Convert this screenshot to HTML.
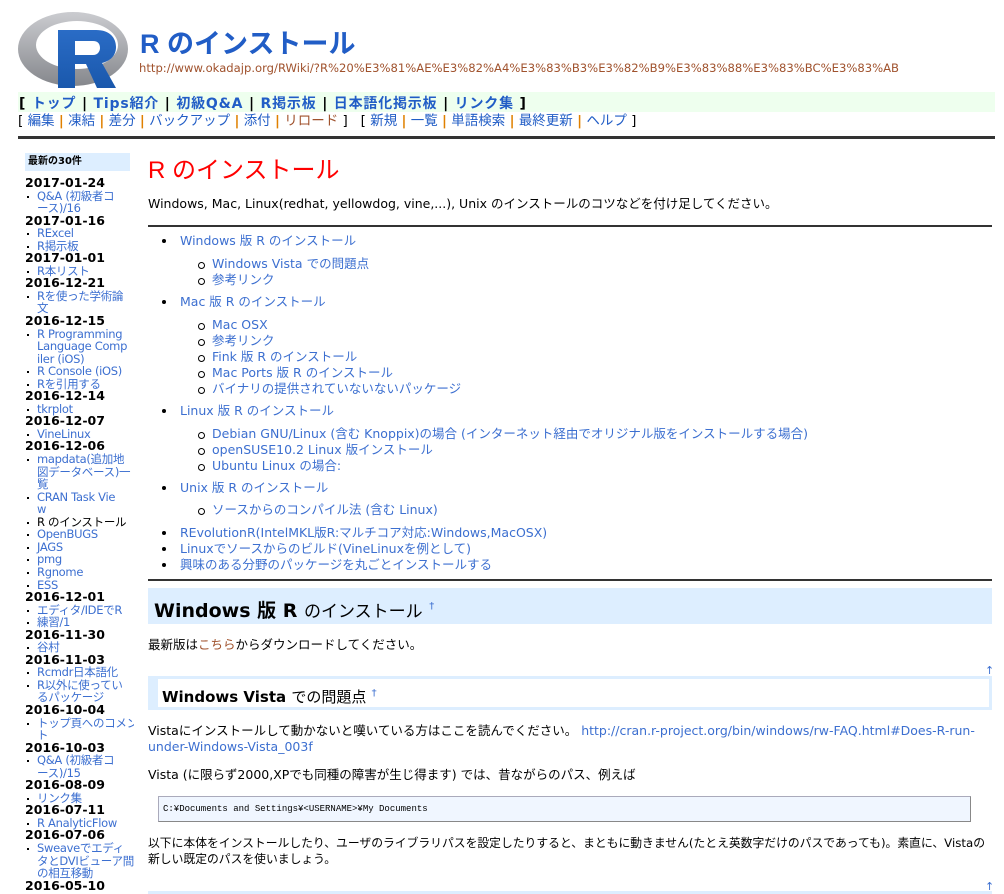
<!DOCTYPE html>
<html><head><meta charset="utf-8">
<style>
*{margin:0;padding:0;box-sizing:border-box}
body{width:1004px;height:894px;overflow:hidden;background:#fff;font-family:"DejaVu Sans","Noto Sans CJK JP",sans-serif;color:#000;position:relative}
.a{position:absolute;white-space:nowrap}
a{color:#215dc6;text-decoration:none}
.lk{color:#3c6fd0}
.menu1{left:18px;top:92px;width:977px;height:20px;background:#eeffee;font-size:14px;font-weight:bold;line-height:24px;padding-left:1px;letter-spacing:0.8px}
.menu1 a{color:#215dc6}
.menu2{left:18px;top:112px;font-size:13.5px;line-height:18px}
.menu2 a{color:#215dc6}
.sep{color:#e08000;font-weight:bold}
.side{position:absolute;left:24px;top:177px;width:110px;overflow:hidden;font-size:11.5px;line-height:12.55px}
.side .d{font-weight:bold;font-size:12.5px;margin-left:1px}
.side .i{position:relative;padding-left:13px;color:#3c6fd0;white-space:nowrap;letter-spacing:-0.3px}
.side .i:before{content:"";position:absolute;left:3px;top:6px;width:2px;height:2px;background:#000}
.b{position:absolute;font-size:12.5px;color:#3c6fd0;white-space:nowrap;line-height:16px}
.b:before{content:"";position:absolute;left:-18px;top:6px;width:4px;height:4px;border-radius:50%;background:#000}
.s:before{left:-14px;top:6px;width:5px;height:5px;background:#fff;border:1px solid #000}
p{position:absolute;font-size:12.5px;white-space:nowrap;line-height:16px}
</style></head><body>

<svg style="position:absolute;left:0;top:0" width="135" height="95">
<defs>
<linearGradient id="g" x1="0" y1="0" x2="0" y2="1"><stop offset="0" stop-color="#cbccd0"/><stop offset="1" stop-color="#85878c"/></linearGradient>
<linearGradient id="bl" x1="0" y1="0" x2="0" y2="1"><stop offset="0" stop-color="#2a6cc6"/><stop offset="1" stop-color="#1a58ac"/></linearGradient>
</defs>
<path fill-rule="evenodd" fill="url(#g)" d="M18 49 A55 37 0 1 0 128 49 A55 37 0 1 0 18 49 Z M36 45 A41 24 0 1 1 118 45 A41 24 0 1 1 36 45 Z"/>
<path fill-rule="evenodd" fill="url(#bl)" d="M58 30 H96 C110 30 116 38 116 47 C116 56 110 61 102 63 L116 88 H97 L86 64 H75 V88 H58 Z M75 41 V55 H93 C98 55 100 51 100 48 C100 44 98 41 93 41 Z"/>
</svg>
<div class="a" style="left:140px;top:22px;font-size:27px;font-weight:bold;color:#215dc6;font-family:'Liberation Sans','Noto Sans CJK JP',sans-serif">R のインストール</div>
<div class="a" style="left:139px;top:61px;font-size:11.6px;color:#a0522d">http://www.okadajp.org/RWiki/?R%20%E3%81%AE%E3%82%A4%E3%83%B3%E3%82%B9%E3%83%88%E3%83%BC%E3%83%AB</div>

<div class="a menu1">[ <a>トップ</a> | <a>Tips紹介</a> | <a>初級Q&amp;A</a> | <a>R掲示板</a> | <a>日本語化掲示板</a> | <a>リンク集</a> ]</div>
<div class="a menu2">[ <a>編集</a> <span class="sep">|</span> <a>凍結</a> <span class="sep">|</span> <a>差分</a> <span class="sep">|</span> <a>バックアップ</a> <span class="sep">|</span> <a>添付</a> <span class="sep">|</span> <a style="color:#a0522d">リロード</a> ] &nbsp; [ <a>新規</a> <span class="sep">|</span> <a>一覧</a> <span class="sep">|</span> <a>単語検索</a> <span class="sep">|</span> <a>最終更新</a> <span class="sep">|</span> <a>ヘルプ</a> ]</div>
<div class="a" style="left:18px;top:136px;width:977px;height:3px;background:#333"></div>

<div class="a" style="left:25px;top:153px;width:105px;height:18px;background:#ddeeff;font-size:10px;font-weight:bold;line-height:18px;padding-left:3px">最新の30件</div>
<div class="side">
<div class="d">2017-01-24</div><div class="i">Q&amp;A (初級者コ<br>ース)/16</div>
<div class="d">2017-01-16</div><div class="i">RExcel</div><div class="i">R掲示板</div>
<div class="d">2017-01-01</div><div class="i">R本リスト</div>
<div class="d">2016-12-21</div><div class="i">Rを使った学術論<br>文</div>
<div class="d">2016-12-15</div><div class="i">R Programming<br>Language Comp<br>iler (iOS)</div><div class="i">R Console (iOS)</div><div class="i">Rを引用する</div>
<div class="d">2016-12-14</div><div class="i">tkrplot</div>
<div class="d">2016-12-07</div><div class="i">VineLinux</div>
<div class="d">2016-12-06</div><div class="i">mapdata(追加地<br>図データベース)一<br>覧</div><div class="i">CRAN Task Vie<br>w</div><div class="i" style="color:#000">R のインストール</div><div class="i">OpenBUGS</div><div class="i">JAGS</div><div class="i">pmg</div><div class="i">Rgnome</div><div class="i">ESS</div>
<div class="d">2016-12-01</div><div class="i">エディタ/IDEでR</div><div class="i">練習/1</div>
<div class="d">2016-11-30</div><div class="i">谷村</div>
<div class="d">2016-11-03</div><div class="i">Rcmdr日本語化</div><div class="i">R以外に使ってい<br>るパッケージ</div>
<div class="d">2016-10-04</div><div class="i">トップ頁へのコメン<br>ト</div>
<div class="d">2016-10-03</div><div class="i">Q&amp;A (初級者コ<br>ース)/15</div>
<div class="d">2016-08-09</div><div class="i">リンク集</div>
<div class="d">2016-07-11</div><div class="i">R AnalyticFlow</div>
<div class="d">2016-07-06</div><div class="i">Sweaveでエディ<br>タとDVIビューア間<br>の相互移動</div>
<div class="d">2016-05-10</div>
</div>

<div class="a" style="left:148px;top:156px;font-size:24px;color:#ff0000;line-height:30px;font-family:'Liberation Sans','Noto Sans CJK JP',sans-serif">R のインストール</div>
<p style="left:148px;top:196px">Windows, Mac, Linux(redhat, yellowdog, vine,...), Unix のインストールのコツなどを付け足してください。</p>
<div class="a" style="left:148px;top:225px;width:844px;height:2px;background:#333"></div>

<div class="b" style="left:180px;top:233px">Windows 版 R のインストール</div>
<div class="b s" style="left:212px;top:256px">Windows Vista での問題点</div>
<div class="b s" style="left:212px;top:272px">参考リンク</div>
<div class="b" style="left:180px;top:294px">Mac 版 R のインストール</div>
<div class="b s" style="left:212px;top:317px">Mac OSX</div>
<div class="b s" style="left:212px;top:333px">参考リンク</div>
<div class="b s" style="left:212px;top:349px">Fink 版 R のインストール</div>
<div class="b s" style="left:212px;top:365px">Mac Ports 版 R のインストール</div>
<div class="b s" style="left:212px;top:381px">バイナリの提供されていないないパッケージ</div>
<div class="b" style="left:180px;top:403px">Linux 版 R のインストール</div>
<div class="b s" style="left:212px;top:426px">Debian GNU/Linux (含む Knoppix)の場合 (インターネット経由でオリジナル版をインストールする場合)</div>
<div class="b s" style="left:212px;top:442px">openSUSE10.2 Linux 版インストール</div>
<div class="b s" style="left:212px;top:458px">Ubuntu Linux の場合:</div>
<div class="b" style="left:180px;top:480px">Unix 版 R のインストール</div>
<div class="b s" style="left:212px;top:502px">ソースからのコンパイル法 (含む Linux)</div>
<div class="b" style="left:180px;top:525px">REvolutionR(IntelMKL版R:マルチコア対応:Windows,MacOSX)</div>
<div class="b" style="left:180px;top:541px">Linuxでソースからのビルド(VineLinuxを例として)</div>
<div class="b" style="left:180px;top:557px">興味のある分野のパッケージを丸ごとインストールする</div>
<div class="a" style="left:148px;top:579px;width:844px;height:2px;background:#333"></div>

<div class="a" style="left:148px;top:588px;width:844px;height:36px;background:#ddeeff;font-size:19px;font-weight:bold;line-height:38px;padding-left:6px">Windows 版 R <span style="font-weight:normal;font-size:17px">のインストール</span> <sup style="font-size:10px;color:#3c6fd0;font-weight:normal;vertical-align:8px">†</sup></div>
<p style="left:148px;top:637px">最新版は<span style="color:#a0522d">こちら</span>からダウンロードしてください。</p>
<div class="a" style="left:985px;top:664px;font-size:11px;color:#3c6fd0">↑</div>
<div class="a" style="left:148px;top:676px;width:844px;height:34px;border:3px solid #ddeeff;border-left-width:10px;border-right-width:3px;font-size:15px;font-weight:bold;line-height:30px;padding-left:4px">Windows Vista <span style="font-weight:normal">での問題点</span> <sup style="font-size:10px;color:#3c6fd0;font-weight:normal;vertical-align:6px">†</sup></div>
<p style="left:148px;top:723px">Vistaにインストールして動かないと嘆いている方はここを読んでください。 <span class="lk">http://cran.r-project.org/bin/windows/rw-FAQ.html#Does-R-run-</span></p>
<p style="left:148px;top:739px"><span class="lk">under-Windows-Vista_003f</span></p>
<p style="left:148px;top:767px">Vista (に限らず2000,XPでも同種の障害が生じ得ます) では、昔ながらのパス、例えば</p>
<div class="a" style="left:158px;top:796px;width:813px;height:26px;background:#f0f6ff;border:1px solid #aab;border-right-color:#888;border-bottom-color:#888;font-family:'Liberation Mono',monospace;font-size:9px;line-height:24px;padding-left:4px">C:¥Documents and Settings¥&lt;USERNAME&gt;¥My Documents</div>
<p style="left:148px;top:835px;font-size:11.8px">以下に本体をインストールしたり、ユーザのライブラリパスを設定したりすると、まともに動きません(たとえ英数字だけのパスであっても)。素直に、Vistaの</p>
<p style="left:148px;top:851px;font-size:11.8px">新しい既定のパスを使いましょう。</p>
<div class="a" style="left:985px;top:880px;font-size:11px;color:#3c6fd0">↑</div>
<div class="a" style="left:148px;top:891px;width:844px;height:3px;background:#ddeeff"></div>
</body></html>
